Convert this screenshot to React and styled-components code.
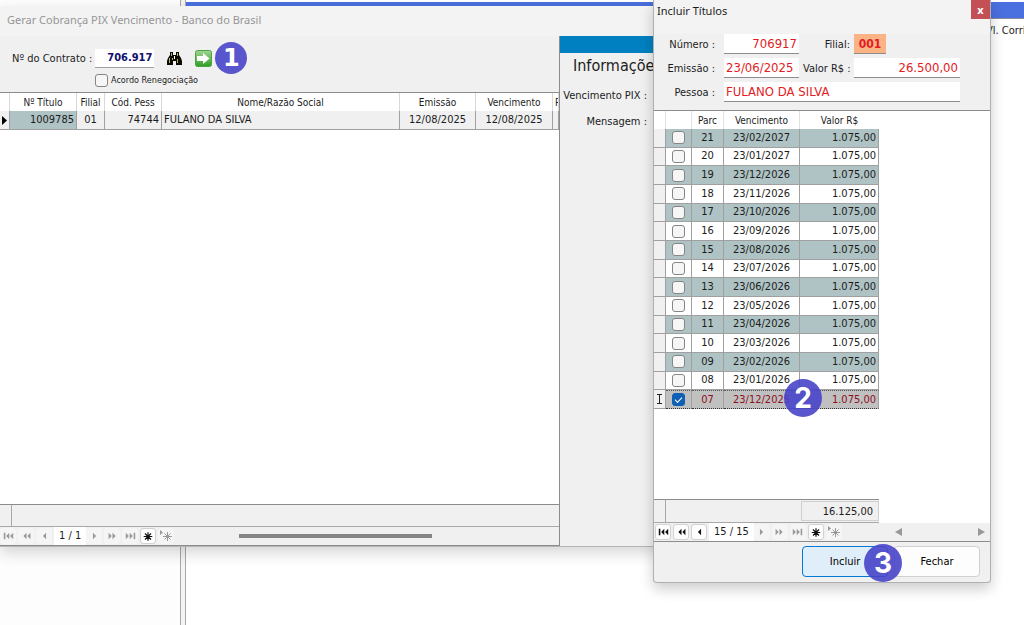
import React from 'react';
import styled, { createGlobalStyle } from 'styled-components';


const parcelas = [
    ['21', '23/02/2027'], ['20', '23/01/2027'], ['19', '23/12/2026'],
    ['18', '23/11/2026'], ['17', '23/10/2026'], ['16', '23/09/2026'],
    ['15', '23/08/2026'], ['14', '23/07/2026'], ['13', '23/06/2026'],
    ['12', '23/05/2026'], ['11', '23/04/2026'], ['10', '23/03/2026'],
    ['09', '23/02/2026'], ['08', '23/01/2026'], ['07', '23/12/2025'],
];

const ICONS = {
    first: 'M1 1h2v8h-2zM8 1v8l-4-4zM13 1v8l-4-4z',
    prevPage: 'M7 1v8l-4-4zM12 1v8l-4-4z',
    prev: 'M9 1v8l-4-4z',
    next: 'M5 1v8l4-4z',
    nextPage: 'M2 1v8l4-4zM7 1v8l4-4z',
    last: 'M1 1v8l4-4zM6 1v8l4-4zM11 1h2v8h-2z',
};

const NavIcon = ({name}) => {
    if (name === 'insert') {
        return (
            <svg width="12" height="11" viewBox="0 0 14 12" stroke="currentColor" strokeWidth="1.4">
                <path d="M7 1v10M2 6h10M3.5 2.5l7 7M10.5 2.5l-7 7" />
            </svg>
        );
    }
    if (name === 'append') {
        return (
            <svg width="14" height="12" viewBox="0 0 14 12" stroke="currentColor" strokeWidth="1">
                <path d="M1 0v5l3-2.5z" fill="currentColor" stroke="none" />
                <path d="M8.5 2v9M4 6.5h9M5.5 3.5l6 6M11.5 3.5l-6 6" />
            </svg>
        );
    }
    return (
        <svg width="11" height="8" viewBox="0 0 14 10" fill="currentColor">
            <path d={ICONS[name]} />
        </svg>
    );
}

const Navigator = ({position, atStart}) => {
    return (
        <>
            {['first', 'prevPage', 'prev'].map(name => (
                <NavButton key={name} aria-label={name} disabled={atStart}><NavIcon name={name} /></NavButton>
            ))}
            <Position>{position}</Position>
            {['next', 'nextPage', 'last'].map(name => (
                <NavButton key={name} aria-label={name} disabled><NavIcon name={name} /></NavButton>
            ))}
            <NavButton aria-label="insert"><NavIcon name="insert" /></NavButton>
            <NavButton aria-label="append" disabled><NavIcon name="append" /></NavButton>
        </>
    );
}

const Binoculars = () => (
    <svg width="17" height="15" viewBox="0 0 17 15">
        <path d="M4 1h3v3h3V1h3v3l2 3 1 3v4h-6v-4H7v4H1v-4l1-3 2-3z" fill="#0b0b00" />
        <path d="M5.5 2v3M3.5 7v5M11.5 2v3M11.5 8v4M6.5 7v2" stroke="#b8b070" strokeWidth="1" />
        <path d="M8.5 5v3" stroke="#fff" />
    </svg>
)

const GreenArrow = () => (
    <svg width="17" height="17" viewBox="0 0 17 17">
        <defs>
            <linearGradient id="green" x1="0" y1="0" x2="0" y2="1">
                <stop offset="0" stopColor="#a3d493" />
                <stop offset="1" stopColor="#2e9f25" />
            </linearGradient>
        </defs>
        <rect x="0.5" y="0.5" width="16" height="16" rx="2" fill="url(#green)" stroke="#4aa540" />
        <path d="M2 6h6V3l6.5 5.5L8 14v-3H2z" fill="#fff" />
    </svg>
)

const App = () => {
    return (
        <Desktop>
            <GlobalStyle />
            <SidePane />
            <Splitter />
            <WorkPane>
                <BlueBar />
                <ColumnHint>Vl. Corrigido</ColumnHint>
            </WorkPane>

            <MainWindow>
                <MainTitle>Gerar Cobrança PIX Vencimento - Banco do Brasil</MainTitle>
                <MainBody>
                    <GridSide>
                        <ContractForm>
                            <ContractRow>
                                <Label htmlFor="contrato">Nº do Contrato :</Label>
                                <ContractInput id="contrato" defaultValue="706.917" />
                                <IconButton aria-label="Pesquisar"><Binoculars /></IconButton>
                                <IconButton aria-label="Avançar"><GreenArrow /></IconButton>
                                <Step>1</Step>
                            </ContractRow>
                            <CheckLabel>
                                <CheckBox type="checkbox" />
                                Acordo Renegociação
                            </CheckLabel>
                        </ContractForm>
                        <TableArea>
                            <TitleTable>
                                <colgroup>
                                    <Col $w={10} /><Col $w={67} /><Col $w={28} /><Col $w={57} />
                                    <Col $w={238} /><Col $w={76} /><Col $w={77} /><Col />
                                </colgroup>
                                <thead>
                                    <tr>
                                        <th></th><th>Nº Título</th><th>Filial</th><th>Cód. Pess</th>
                                        <th>Nome/Razão Social</th><th>Emissão</th><th>Vencimento</th><CutHeader>P</CutHeader>
                                    </tr>
                                </thead>
                                <tbody>
                                    <tr>
                                        <MarkerCell>
                                            <svg width="6" height="9" viewBox="0 0 6 9"><path d="M0 0v9l5-4.5z" /></svg>
                                        </MarkerCell>
                                        <Cell $align="right" $tint>1009785</Cell>
                                        <Cell>01</Cell>
                                        <Cell $align="right">74744</Cell>
                                        <Cell $align="left">FULANO DA SILVA</Cell>
                                        <Cell>12/08/2025</Cell>
                                        <Cell>12/08/2025</Cell>
                                        <Cell />
                                    </tr>
                                </tbody>
                            </TitleTable>
                        </TableArea>
                        <GridFooter><FooterMark /></GridFooter>
                        <Nav>
                            <Navigator position="1 / 1" atStart />
                            <Track><Thumb /></Track>
                        </Nav>
                    </GridSide>
                    <InfoSide>
                        <InfoStripe />
                        <InfoTitle>Informações</InfoTitle>
                        <InfoLabel>Vencimento PIX :</InfoLabel>
                        <InfoLabel>Mensagem :</InfoLabel>
                    </InfoSide>
                </MainBody>
            </MainWindow>

            <Dialog role="dialog" aria-label="Incluir Títulos">
                <DialogTitle>
                    Incluir Títulos
                    <CloseButton>x</CloseButton>
                </DialogTitle>
                <DialogForm>
                    <Label htmlFor="numero" $first>Número :</Label>
                    <RedInput id="numero" $right defaultValue="706917" />
                    <Label htmlFor="filial">Filial:</Label>
                    <BranchInput id="filial" defaultValue="001" />
                    <Label htmlFor="emissao" $first>Emissão :</Label>
                    <RedInput id="emissao" defaultValue="23/06/2025" />
                    <Label htmlFor="valor">Valor R$ :</Label>
                    <RedInput id="valor" $right defaultValue="26.500,00" />
                    <Label htmlFor="pessoa" $first>Pessoa :</Label>
                    <PersonInput id="pessoa" defaultValue="FULANO DA SILVA" />
                </DialogForm>
                <ParcelArea>
                    <ParcelTable>
                        <colgroup>
                            <Col $w={12} /><Col $w={26} /><Col $w={32} /><Col $w={76} /><Col $w={79} />
                        </colgroup>
                        <thead>
                            <tr><th></th><th></th><th>Parc</th><th>Vencimento</th><th>Valor R$</th></tr>
                        </thead>
                        <tbody>
                            {parcelas.map(([parc, venc], i) => {
                                const selected = parc === '07';
                                return (
                                    <ParcelRow key={parc} $odd={i % 2 === 0} $selected={selected}>
                                        <MarkerCell>
                                            {selected &&
                                                <svg width="7" height="10" viewBox="0 0 7 10" stroke="#222" fill="none">
                                                    <path d="M1 0.5h5M1 9.5h5M3.5 0v10" />
                                                </svg>
                                            }
                                        </MarkerCell>
                                        <Cell><CheckBox type="checkbox" aria-label={`Parcela ${parc}`} defaultChecked={selected} /></Cell>
                                        <Cell>{parc}</Cell>
                                        <Cell>{venc}</Cell>
                                        <Cell $align="right">1.075,00</Cell>
                                    </ParcelRow>
                                )
                            })}
                        </tbody>
                    </ParcelTable>
                    <TotalRow>
                        <FooterMark />
                        <Total>16.125,00</Total>
                    </TotalRow>
                    <Step $over="row">2</Step>
                </ParcelArea>
                <DialogNav>
                    <Navigator position="15 / 15" />
                    <ScrollArrows>
                        <svg width="7" height="8" viewBox="0 0 7 8"><path d="M7 0v8L0 4z" fill="#999" /></svg>
                        <svg width="7" height="8" viewBox="0 0 7 8"><path d="M0 0v8l7-4z" fill="#999" /></svg>
                    </ScrollArrows>
                </DialogNav>
                <Actions>
                    <ActionButton $primary>Incluir</ActionButton>
                    <ActionButton>Fechar</ActionButton>
                    <Step $over="actions">3</Step>
                </Actions>
            </Dialog>
        </Desktop>
    );
}


const GlobalStyle = createGlobalStyle`
    * {
        box-sizing: border-box;
    }
    body {
        margin: 0;
        overflow: hidden;
        color: #1c1c1c;
        font-family: "DejaVu Sans Condensed", "DejaVu Sans", sans-serif;
        font-size: 10px;
    }
    button, input {
        font: inherit;
        margin: 0;
    }
    svg {
        display: block;
    }
`

const Desktop = styled.div`
    position: relative;
    display: flex;
    min-height: 100vh;
    background: #fff;
`;

const SidePane = styled.div`
    flex: none;
    width: 180px;
    background: #fdfdfd;
`;

const Splitter = styled.div`
    flex: none;
    width: 6px;
    border: solid #a8a8a8;
    border-width: 0 1px;
    background: #f4f4f4;
`;

const WorkPane = styled.div`
    flex: 1;
    min-width: 0;
    padding-top: 2px;
    overflow: hidden;
`;

const BlueBar = styled.div`
    height: 17px;
    background: #4a70df;
    border-bottom: 1px solid #8a8a9a;
`;

const ColumnHint = styled.div`
    margin-left: 800px;
    padding-top: 4px;
    font-size: 11px;
    line-height: 16px;
    white-space: nowrap;
`;

const MainWindow = styled.div`
    position: absolute;
    top: 6px;
    left: 0;
    width: 980px;
    background: #f0f0f0;
    border-bottom: 1px solid #b5b5b5;
    box-shadow: 0 6px 14px rgba(0, 0, 0, 0.16);
`;

const MainTitle = styled.div`
    height: 30px;
    padding-left: 7px;
    line-height: 28px;
    font-family: "Noto Sans", sans-serif;
    font-size: 11px;
    color: #969696;
    background: #f3f3f3;
`;

const MainBody = styled.div`
    display: flex;
`;

const GridSide = styled.div`
    width: 560px;
    border-right: 1px solid #8c8c8c;
`;

const ContractForm = styled.div`
    height: 56px;
    padding: 10px 0 0 12px;
`;

const ContractRow = styled.div`
    display: flex;
    align-items: center;
    height: 24px;
    margin-bottom: 2px;
    gap: 3px;
`;

const Label = styled.label`
    padding-right: ${({$first}) => $first ? '5px' : '0'};
    font-size: 11px;
    text-align: right;
    white-space: nowrap;
`;

const ContractInput = styled.input`
    width: 59px;
    height: 19px;
    padding: 0 2px;
    border: 0;
    border-bottom: 1px solid #a0a0a0;
    background: #fff;
    color: #10106e;
    font-size: 11px;
    font-weight: bold;
    text-align: right;
`;

const IconButton = styled.button`
    margin-left: 9px;
    padding: 0;
    border: 0;
    background: none;
`;

const Step = styled.span`
    display: flex;
    align-items: center;
    justify-content: center;
    width: ${({$over}) => $over ? '38px' : '32px'};
    height: ${({$over}) => $over ? '38px' : '32px'};
    flex: none;
    border-radius: 50%;
    background: rgba(72, 68, 200, 0.9);
    color: #fff;
    font-family: ${({$over}) => $over ? 'Inter, sans-serif' : '"DejaVu Sans", sans-serif'};
    font-size: ${({$over}) => $over ? '28px' : '24px'};
    font-weight: bold;
    line-height: 1;
    ${({$over}) => $over && 'position: absolute;'}
    ${({$over}) => $over === 'row' && 'left: 130px; top: 268px;'}
    ${({$over}) => $over === 'actions' && 'left: 210px; top: 2px;'}
`;

const CheckLabel = styled.label`
    display: flex;
    align-items: center;
    gap: 3px;
    height: 16px;
    padding-left: 83px;
    font-size: 9px;
`;

const CheckBox = styled.input`
    appearance: none;
    display: block;
    width: 13px;
    height: 13px;
    border: 1px solid #858585;
    border-radius: 3px;
    background: #f6f6f6;

    td & {
        margin: 0 auto;
    }
    &:checked {
        border-color: #0f5fb5;
        background: #0f5fb5;
    }
    &:checked::after {
        content: "";
        display: block;
        width: 6px;
        height: 3px;
        margin: 3px auto 0;
        border: solid #fff;
        border-width: 0 0 1px 1px;
        transform: rotate(-45deg);
    }
`;

const TableArea = styled.div`
    height: 412px;
    background: #fff;
    border-top: 1px solid #8c8c8c;
`;

const Col = styled.col`
    width: ${({$w}) => $w ? `${$w}px` : 'auto'};
`;

const TitleTable = styled.table`
    width: 100%;
    table-layout: fixed;
    border-collapse: separate;
    border-spacing: 0;

    th {
        height: 18px;
        padding: 0;
        border-right: 1px solid #d8d8d8;
        font-weight: normal;
        white-space: nowrap;
    }
    td {
        height: 19px;
        background-color: #f0f0f0;
    }
`;

const CutHeader = styled.th`
    overflow: hidden;
    text-align: left;
    && {
        padding-left: 2px;
    }
`;

const Cell = styled.td`
    padding: 0 2px;
    border-right: 1px solid #a0a0a0;
    border-bottom: 1px solid #a0a0a0;
    font-size: 11px;
    line-height: 14px;
    text-align: ${({$align}) => $align || 'center'};
    white-space: nowrap;
    && {
        ${({$tint}) => $tint && 'background-color: #afc3c4;'}
    }
`;

const MarkerCell = styled.td`
    padding: 0 2px;
    border-right: 1px solid #a0a0a0;
    border-bottom: 1px solid #a0a0a0;
`;

const GridFooter = styled.div`
    display: flex;
    height: 23px;
    border-top: 1px solid #8c8c8c;
    border-bottom: 1px solid #a8a8a8;
`;

const FooterMark = styled.span`
    width: 12px;
    border-right: 1px solid #a8a8a8;
`;

const Nav = styled.div`
    display: flex;
    align-items: center;
    height: 19px;
    border-bottom: 1px solid #8c8c8c;
`;

const DialogNav = styled(Nav)`
    padding-left: 1px;
`;

const NavButton = styled.button`
    display: flex;
    align-items: center;
    justify-content: center;
    width: 16px;
    height: 16px;
    margin-right: 2px;
    padding: 0;
    border: 1px solid #d2d2d2;
    border-radius: 3px;
    background: #fdfdfd;
    color: #111;

    &:disabled {
        border-color: #f5f5f5;
        background: #f5f5f5;
        color: #999;
    }
`;

const Position = styled.span`
    min-width: 32px;
    height: 18px;
    padding: 0 5px;
    background: #fff;
    font-size: 11px;
    line-height: 18px;
    text-align: center;
    white-space: nowrap;
`;

const Track = styled.div`
    flex: 1;
    padding-left: 63px;
`;

const Thumb = styled.div`
    width: 193px;
    height: 4px;
    background: #858585;
`;

const InfoSide = styled.div`
    flex: 1;
`;

const InfoStripe = styled.div`
    height: 17px;
    background: #0080c0;
`;

const InfoTitle = styled.div`
    padding-left: 13px;
    font-size: 16px;
    line-height: 26px;
`;

const InfoLabel = styled.div`
    width: 87px;
    height: 26px;
    padding-top: 10px;
    font-size: 11px;
    text-align: right;
    white-space: nowrap;
`;

const Dialog = styled.div`
    position: absolute;
    top: 0;
    left: 653px;
    width: 338px;
    background: #f0f0f0;
    border: 1px solid #b0b0b0;
    border-top: 0;
    border-radius: 0 0 4px 4px;
    box-shadow: 0 6px 14px rgba(0, 0, 0, 0.2);
`;

const DialogTitle = styled.div`
    display: flex;
    justify-content: space-between;
    height: 34px;
    padding-left: 3px;
    background: #f3f3f3;
    font-family: "Noto Sans", sans-serif;
    font-size: 11px;
    line-height: 22px;
`;

const CloseButton = styled.button`
    width: 19px;
    height: 19px;
    padding: 0;
    border: 0;
    background: #c35055;
    color: #fff;
    font-size: 11px;
    font-weight: bold;
    line-height: 15px;
`;

const DialogForm = styled.div`
    display: grid;
    grid-template-columns: 66px 75px 47px 106px;
    grid-template-rows: 20px 20px 20px;
    gap: 4px;
    height: 76px;
    align-items: center;
`;

const RedInput = styled.input`
    width: 100%;
    min-width: 0;
    height: 20px;
    padding: 0 2px;
    border: 0;
    border-bottom: 1px solid #8c8c8c;
    background: #fff;
    color: #e31b23;
    font-size: 13px;
    text-align: ${({$right}) => $right ? 'right' : 'left'};
`;

const BranchInput = styled(RedInput)`
    width: 32px;
    background: #f9b385;
    font-size: 12px;
    font-weight: bold;
    text-align: center;
`;

const PersonInput = styled(RedInput)`
    grid-column: 2 / -1;
`;

const ParcelArea = styled.div`
    position: relative;
    display: flex;
    flex-direction: column;
    justify-content: space-between;
    height: 413px;
    background: #fff;
    border-top: 1px solid #8c8c8c;
`;

const ParcelTable = styled.table`
    table-layout: fixed;
    width: 225px;
    height: 298px;
    border-collapse: separate;
    border-spacing: 0;

    th {
        height: 18px;
        padding: 0;
        border-right: 1px solid #e2e2e2;
        font-weight: normal;
    }
    th:last-child {
        border-right: 0;
    }
`;

const rowColor = ({$odd, $selected}) => {
    if ($selected) return '#c0c0c0';
    return $odd ? '#afc3c4' : '#fff';
}

const ParcelRow = styled.tr`
    color: ${({$selected}) => $selected ? '#8c1020' : 'inherit'};

    td {
        height: 18px;
        background: ${rowColor};
    }
    td:first-child {
        background: #f0f0f0;
    }
    td:not(:first-child) {
        ${({$selected}) => $selected && 'border-top: 1px dotted #555; border-bottom: 1px dotted #333;'}
    }
`;

const TotalRow = styled.div`
    display: flex;
    justify-content: space-between;
    width: 225px;
    height: 24px;
    background: #f0f0f0;
    border-top: 1px solid #8c8c8c;
    border-bottom: 1px solid #a8a8a8;
`;

const Total = styled.span`
    width: 78px;
    margin: 1px 0;
    padding-right: 5px;
    border: 1px solid #d0d0d0;
    font-size: 11px;
    line-height: 19px;
    text-align: right;
`;

const ScrollArrows = styled.div`
    display: flex;
    flex: 1;
    justify-content: space-between;
    padding: 0 5px 0 51px;
`;

const Actions = styled.div`
    position: relative;
    display: flex;
    height: 40px;
    gap: 6px;
    padding: 4px 10px 0 148px;
`;

const ActionButton = styled.button`
    flex: 1;
    height: 31px;
    border: 1px solid ${({$primary}) => $primary ? '#0078d4' : '#d0d0d0'};
    border-radius: 4px;
    background: ${({$primary}) => $primary ? '#e0eef9' : '#fdfdfd'};
    font-size: 11px;
`;

export default App;
